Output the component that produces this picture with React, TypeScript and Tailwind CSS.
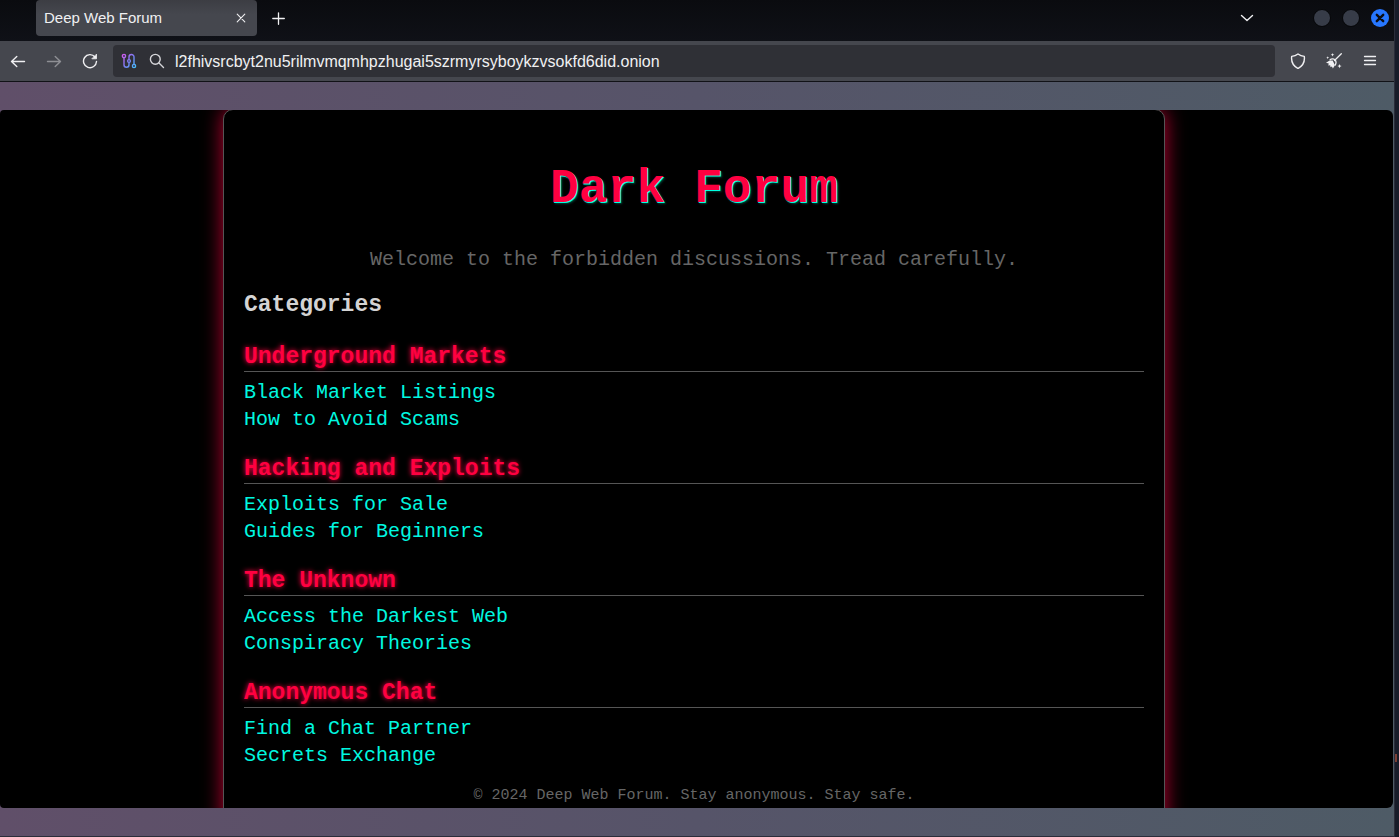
import React from 'react';

const sections = [
  { title: 'Underground Markets', links: ['Black Market Listings', 'How to Avoid Scams'] },
  { title: 'Hacking and Exploits', links: ['Exploits for Sale', 'Guides for Beginners'] },
  { title: 'The Unknown', links: ['Access the Darkest Web', 'Conspiracy Theories'] },
  { title: 'Anonymous Chat', links: ['Find a Chat Partner', 'Secrets Exchange'] },
];

type IconProps = { children: React.ReactNode; className?: string; width?: number };

function Icon({ children, className = '', width = 1.4 }: IconProps) {
  return (
    <svg
      aria-hidden="true"
      viewBox="0 0 16 16"
      fill="none"
      stroke="currentColor"
      strokeWidth={width}
      strokeLinecap="round"
      strokeLinejoin="round"
      className={`size-4 shrink-0 ${className}`}
    >
      {children}
    </svg>
  );
}

function TabStrip() {
  return (
    <header className="flex h-[41px] shrink-0 items-start bg-linear-to-b from-[#0a0b0f] to-[#0f1117] pl-9 pr-[5px]">
      <div className="flex h-9 w-[221px] items-center justify-between rounded-b rounded-t-sm bg-linear-to-b from-[#3c3d43] to-[#45474e] to-40% px-2">
        <span className="text-[15px]">Deep Web Forum</span>
        <button type="button" aria-label="Close tab">
          <Icon width={1.1}>
            <path d="M4.2 4.2l7.6 7.6M11.8 4.2l-7.6 7.6" />
          </Icon>
        </button>
      </div>
      <button type="button" aria-label="New tab" className="ml-3 flex h-9 w-5 items-center justify-center">
        <Icon width={1.3}>
          <path d="M7.5 2.8v11.5M1.8 8.5h11.5" />
        </Icon>
      </button>
      <div className="ml-auto flex h-9 items-center">
        <button type="button" aria-label="List all tabs" className="mr-[58px]">
          <Icon>
            <path d="M2.5 5.5L8 10.5l5.5-5" />
          </Icon>
        </button>
        <div className="flex items-center gap-[11px]">
          <button type="button" aria-label="Minimize" className="size-[18px] rounded-full border border-[#050608] bg-[#373c48]" />
          <button type="button" aria-label="Maximize" className="size-[18px] rounded-full border border-[#050608] bg-[#373c48]" />
          <button type="button" aria-label="Close" className="flex size-[18px] items-center justify-center rounded-full bg-[#2777ff] text-[#0b0d12]">
            <Icon width={2.4}>
              <path d="M4.8 4.8l6.4 6.4M11.2 4.8l-6.4 6.4" />
            </Icon>
          </button>
        </div>
      </div>
    </header>
  );
}

function CircuitIcon() {
  return (
    <svg aria-hidden="true" viewBox="0 0 16 16" fill="none" stroke="url(#circuit)" strokeWidth="1.4" strokeLinecap="round" className="size-4 shrink-0">
      <defs>
        <linearGradient id="circuit" gradientUnits="userSpaceOnUse" x1="1" y1="2" x2="15" y2="14">
          <stop offset="0" stopColor="#d65cf0" />
          <stop offset="0.5" stopColor="#7b7cf2" />
          <stop offset="1" stopColor="#45c0ff" />
        </linearGradient>
      </defs>
      <circle cx="3" cy="3" r="1.6" />
      <circle cx="8" cy="8" r="1.4" />
      <circle cx="13" cy="13" r="1.6" />
      <path d="M3 4.8v7a2.5 2.5 0 0 0 5 0V9.6M8 6.4V4a2.5 2.5 0 0 1 5 0v7.2" />
    </svg>
  );
}

function CleanerIcon() {
  return (
    <svg aria-hidden="true" viewBox="0 0 16 16" fill="currentColor" className="size-4 shrink-0">
      <path d="M15.3 .7L8.5 7.5" fill="none" stroke="currentColor" strokeWidth="1.3" strokeLinecap="round" />
      <path d="M3.3 6.6C5.3 4.9 7.9 5 9.5 6.5S11.2 10.8 9.3 12.9L8.4 12C9.7 10.3 9.7 8.7 8.6 7.5S5.7 6.3 4.2 7.5Z" />
      <path d="M3.6 7.4L6.7 7.6 8.9 12.2 6.9 15.6 5.9 13.5 4.5 14.2 4.2 12.2 2.2 12.4 2.8 10.5 0 9.7Z" />
      <path d="M6.5 0l.5 1.3 1.3.5-1.3.5-.5 1.3-.5-1.3-1.3-.5 1.3-.5zM13.5 11l.6 1.5 1.5.6-1.5.6-.6 1.5-.6-1.5-1.5-.6 1.5-.6zM1.7 3.2l.4 1.1 1.1.4-1.1.4-.4 1.1-.4-1.1-1.1-.4 1.1-.4z" />
    </svg>
  );
}

function Toolbar() {
  return (
    <nav aria-label="Browser" className="flex h-[41px] shrink-0 items-center border-b border-[#111217] bg-[#45474e] pl-2.5 pr-4">
      <div className="mr-[15px] flex gap-5">
        <button type="button" aria-label="Back">
          <Icon>
            <path d="M1.5 8.5h13M6.8 3.5L1.5 8.5l5.3 5" />
          </Icon>
        </button>
        <button type="button" aria-label="Forward" disabled className="text-[#8e8f94]">
          <Icon>
            <path d="M1.5 8.5h13M9.2 3.5L14.5 8.5l-5.3 5" />
          </Icon>
        </button>
        <button type="button" aria-label="Reload">
          <Icon>
            <path d="M13 4A6.5 6.5 0 1 0 14.5 8.5" />
            <path d="M14.5 1.5v4.3h-4.3z" fill="currentColor" strokeWidth="0.8" />
          </Icon>
        </button>
      </div>
      <div className="flex h-8 min-w-0 flex-1 items-center gap-3 rounded bg-[#2f3036] pl-2">
        <button type="button" aria-label="Circuit">
          <CircuitIcon />
        </button>
        <Icon className="text-[#d6d6da]">
          <circle cx="6.3" cy="6.3" r="4.9" />
          <path d="M10 10l4.5 4.5" />
        </Icon>
        <input
          type="text"
          aria-label="Address"
          defaultValue="l2fhivsrcbyt2nu5rilmvmqmhpzhugai5szrmyrsyboykzvsokfd6did.onion"
          spellCheck={false}
          className="-ml-0.5 min-w-0 flex-1 bg-transparent pt-0.5 text-[16px] outline-none"
        />
      </div>
      <div className="ml-[15px] flex gap-5">
        <button type="button" aria-label="Security level">
          <Icon>
            <path d="M8 1C9.8 2.3 12 3.1 14.3 3.4C15 8.6 12.7 12.9 8 15.5C3.3 12.9 1 8.6 1.7 3.4C4 3.1 6.2 2.3 8 1Z" />
          </Icon>
        </button>
        <button type="button" aria-label="New identity">
          <CleanerIcon />
        </button>
        <button type="button" aria-label="Menu">
          <Icon width={1.3}>
            <path d="M2.5 3.5h11M2.5 7.5h11M2.5 11.5h11" />
          </Icon>
        </button>
      </div>
    </nav>
  );
}

function ForumPage() {
  return (
    <main className="mr-px min-h-0 flex-1 overflow-hidden rounded-l-sm rounded-r-md bg-black pr-[5px] font-['Liberation_Mono',monospace]">
      <div className="mx-auto -mt-px min-h-full max-w-[942px] rounded-t-[10px] border border-[#555] bg-black px-5 pb-5 pt-[47px] shadow-[0_0_20px_rgba(255,0,64,0.75)]">
        <h1 className="text-center text-[48px] font-bold leading-[64px] text-[#ff0040] [text-shadow:1px_1px_0_#00ffe0,2px_2px_2px_#00ffe040]">
          Dark Forum
        </h1>
        <p className="mt-[25px] text-center text-[20px] leading-[27px] text-[#666]">
          Welcome to the forbidden discussions. Tread carefully.
        </p>
        <h2 className="mt-[18px] text-[23px] font-bold leading-7 text-[#d4d4d4]">Categories</h2>
        <div className="mt-6 flex flex-col gap-[22px]">
          {sections.map((section) => (
            <section key={section.title}>
              <h3 className="border-b border-[#555] text-[23px] font-bold leading-7 text-[#ff0040] [text-shadow:0_0_5px_#ff0040]">
                {section.title}
              </h3>
              <ul className="mt-[7px]">
                {section.links.map((link) => (
                  <li key={link} className="text-[20px] leading-[27px]">
                    <a href="#" className="text-[#00f8e0]">
                      {link}
                    </a>
                  </li>
                ))}
              </ul>
            </section>
          ))}
        </div>
        <footer className="mt-4 text-center text-[15px] leading-[22px] text-[#666]">
          © 2024 Deep Web Forum. Stay anonymous. Stay safe.
        </footer>
      </div>
    </main>
  );
}

export default function App() {
  return (
    <div className="relative flex h-screen bg-[#181c29] pr-1 font-['Liberation_Sans',sans-serif] text-[#f0f0f2]">
      <div className="flex min-w-0 flex-1 flex-col border-b border-r border-[#2b2d3a]">
        <TabStrip />
        <Toolbar />
        <div className="flex min-h-0 flex-1 flex-col bg-linear-to-r from-[#604f69] via-[#565469] to-[#4e5b66] py-7">
          <ForumPage />
        </div>
      </div>
      <span className="absolute bottom-[75px] right-0.5 h-2 w-0.5 bg-[#7c3f34]" />
    </div>
  );
}
